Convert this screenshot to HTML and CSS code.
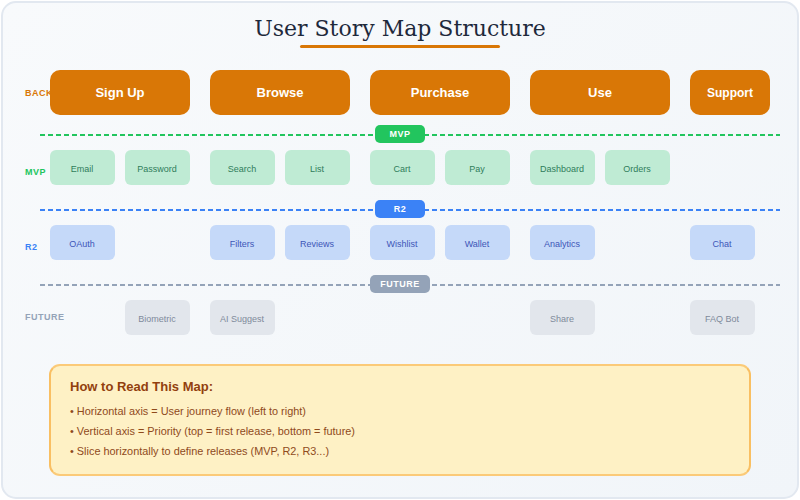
FILE: index.html
```html
<!DOCTYPE html>
<html lang="en">
<head>
  <title>User Story Map Structure</title>
  <meta charset="utf-8">
  <link rel="stylesheet" href="styles.css">
</head>
<body>
    <div class="story-map">
        <h1 class="map-title">User Story Map Structure</h1>
        <div class="title-rule"></div>

        <div class="row backbone-row">
            <div class="row-label backbone-label">BACKBONE</div>
            <div class="groups">
                <div class="activity">Sign Up</div>
                <div class="activity">Browse</div>
                <div class="activity">Purchase</div>
                <div class="activity">Use</div>
                <div class="activity small">Support</div>
            </div>
        </div>

        <div class="slice mvp"><span class="slice-tag">MVP</span></div>
        <div class="row">
            <div class="row-label low mvp-label">MVP</div>
            <div class="groups">
                <div class="group"><div class="card mvp">Email</div><div class="card mvp">Password</div></div>
                <div class="group"><div class="card mvp">Search</div><div class="card mvp">List</div></div>
                <div class="group"><div class="card mvp">Cart</div><div class="card mvp">Pay</div></div>
                <div class="group"><div class="card mvp">Dashboard</div><div class="card mvp">Orders</div></div>
                <div class="group small"></div>
            </div>
        </div>

        <div class="slice r2"><span class="slice-tag">R2</span></div>
        <div class="row">
            <div class="row-label low r2-label">R2</div>
            <div class="groups">
                <div class="group"><div class="card r2">OAuth</div></div>
                <div class="group"><div class="card r2">Filters</div><div class="card r2">Reviews</div></div>
                <div class="group"><div class="card r2">Wishlist</div><div class="card r2">Wallet</div></div>
                <div class="group"><div class="card r2">Analytics</div></div>
                <div class="group small"><div class="card r2">Chat</div></div>
            </div>
        </div>

        <div class="slice future"><span class="slice-tag">FUTURE</span></div>
        <div class="row">
            <div class="row-label future-label">FUTURE</div>
            <div class="groups">
                <div class="group end"><div class="card future">Biometric</div></div>
                <div class="group"><div class="card future">AI Suggest</div></div>
                <div class="group"></div>
                <div class="group"><div class="card future">Share</div></div>
                <div class="group small"><div class="card future">FAQ Bot</div></div>
            </div>
        </div>

        <div class="legend">
            <h2 class="legend-title">How to Read This Map:</h2>
            <p>• Horizontal axis = User journey flow (left to right)</p>
            <p>• Vertical axis = Priority (top = first release, bottom = future)</p>
            <p>• Slice horizontally to define releases (MVP, R2, R3...)</p>
        </div>
    </div>
</body>
</html>
```

FILE: styles.css
```css
* {
    box-sizing: border-box;
}
body {
    margin: 0;
    background: #fff;
    font-family: "Liberation Sans", Arial, sans-serif;
}
.story-map {
    width: 798px;
    height: 498px;
    margin: 1px;
    padding-top: 9px;
    border: 2px solid #e2e8f0;
    border-radius: 15px;
    background: linear-gradient(135deg, #f8fafc, #f1f5f9);
}
.map-title {
    margin: 0;
    font-family: "DejaVu Serif", serif;
    font-size: 22px;
    font-weight: 400;
    line-height: 33px;
    text-align: center;
    color: #1e293b;
}
.title-rule {
    width: 200px;
    height: 3px;
    margin: 0 auto;
    border-radius: 2px;
    background: #d97706;
}
.row {
    display: flex;
    padding-left: 22px;
    margin-top: 7px;
}
.backbone-row {
    margin-top: 22px;
}
.row-label {
    display: flex;
    align-items: center;
    width: 25px;
    font-size: 9px;
    font-weight: 700;
    letter-spacing: 0.5px;
    white-space: nowrap;
}
.row-label.low {
    padding-top: 9px;
}
.backbone-label {
    color: #d97706;
}
.mvp-label {
    color: #22c55e;
}
.r2-label {
    color: #3b82f6;
}
.future-label {
    padding-bottom: 1px;
    color: #94a3b8;
}
.groups {
    display: flex;
    gap: 20px;
}
.activity {
    display: flex;
    align-items: center;
    justify-content: center;
    width: 140px;
    height: 45px;
    border-radius: 10px;
    background: #d97706;
    color: #fff;
    font-size: 13px;
    font-weight: 700;
}
.activity.small {
    width: 80px;
    font-size: 12px;
}
.group {
    display: flex;
    gap: 10px;
    width: 140px;
    height: 35px;
}
.group.small {
    width: 80px;
}
.group.end {
    justify-content: flex-end;
}
.card {
    display: flex;
    align-items: center;
    justify-content: center;
    width: 65px;
    padding: 3px 1px 0 0;
    border-radius: 6px;
    font-size: 9px;
}
.card.mvp {
    background: #bfebd4;
    color: #2f7d5b;
}
.card.r2 {
    background: #c5d9f9;
    color: #3d56b8;
}
.card.future {
    background: #e2e6ec;
    color: #7f8a9b;
}
.slice {
    display: flex;
    justify-content: center;
    height: 18px;
    margin: 15px 17px 0 37px;
    padding-right: 20px;
    background-size: 8px 2px;
    background-position: 0 9px;
    background-repeat: repeat-x;
}
.slice.mvp {
    margin-top: 10px;
    background-image: linear-gradient(to right, #22c55e 5px, transparent 5px);
}
.slice.r2 {
    background-image: linear-gradient(to right, #3b82f6 5px, transparent 5px);
}
.slice.future {
    background-image: linear-gradient(to right, #94a3b8 5px, transparent 5px);
}
.slice-tag {
    width: 50px;
    border-radius: 5px;
    color: #fff;
    font-size: 9px;
    font-weight: 700;
    letter-spacing: 0.5px;
    line-height: 18px;
    text-align: center;
}
.mvp .slice-tag {
    background: #22c55e;
}
.r2 .slice-tag {
    background: #3b82f6;
}
.future .slice-tag {
    width: 60px;
    background: #94a3b8;
}
.legend {
    width: 702px;
    height: 112px;
    margin: 29px 0 0 46px;
    padding: 12px 19px 0;
    border: 2px solid;
    border-color: #fbca78 #f9bf62;
    border-radius: 11px;
    background: #fef1c5;
    color: #92400e;
}
.legend-title {
    margin: 0 0 5px;
    font-size: 13px;
    font-weight: 700;
    line-height: 18px;
}
.legend p {
    margin: 0;
    font-size: 10.9px;
    line-height: 20px;
    color: #8f4a1c;
}
```
